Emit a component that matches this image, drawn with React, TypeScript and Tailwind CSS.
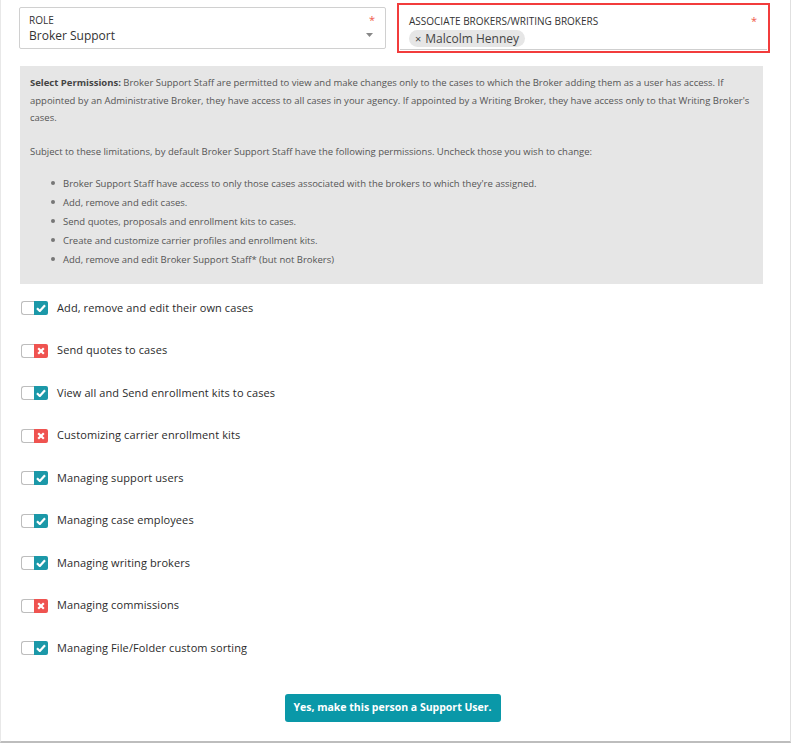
// App.tsx — support-user permissions form.
const PERMS: { label: string; on: boolean }[] = [
  { label: "Add, remove and edit their own cases", on: true },
  { label: "Send quotes to cases", on: false },
  { label: "View all and Send enrollment kits to cases", on: true },
  { label: "Customizing carrier enrollment kits", on: false },
  { label: "Managing support users", on: true },
  { label: "Managing case employees", on: true },
  { label: "Managing writing brokers", on: true },
  { label: "Managing commissions", on: false },
  { label: "Managing File/Folder custom sorting", on: true },
];

const BULLETS = [
  "Broker Support Staff have access to only those cases associated with the brokers to which they're assigned.",
  "Add, remove and edit cases.",
  "Send quotes, proposals and enrollment kits to cases.",
  "Create and customize carrier profiles and enrollment kits.",
  "Add, remove and edit Broker Support Staff* (but not Brokers)",
];

function Toggle({ on }: { on: boolean }) {
  return (
    <div className="flex h-[14px] items-center">
      <div className="h-[14px] w-[13px] rounded-l-[3px] border border-r-0 border-[#bdbdbd] bg-white" />
      <div
        className={`flex h-[14px] w-[14px] items-center justify-center rounded-r-[2px] ${
          on ? "bg-[#1b98a8]" : "bg-[#ef5350]"
        }`}
      >
        {on ? (
          <svg width="10" height="8" viewBox="0 0 10 8">
            <path d="M1 4.2 L3.8 7 L9 1.2" fill="none" stroke="white" strokeWidth="2.2" />
          </svg>
        ) : (
          <svg width="8" height="8" viewBox="0 0 8 8">
            <path d="M1.2 1.2 L6.8 6.8 M6.8 1.2 L1.2 6.8" stroke="white" strokeWidth="2.2" />
          </svg>
        )}
      </div>
    </div>
  );
}

export default function App() {
  return (
    <div
      className="h-[744px] w-[792px] bg-white"
      style={{ fontFamily: '"Open Sans", "Noto Sans", sans-serif' }}
    >
      <div className="flex h-[743px] w-[791px] flex-col border-b-2 border-l border-r border-b-[#bdbdbd] border-l-[#e8e8e8] border-r-[#e0e0e0]">
        {/* top selects */}
        <div className="flex items-start pt-[3px]">
          <div className="ml-[18px] mt-[4px] flex h-[42px] w-[367px] flex-col rounded-[2px] border border-[#d0d0d0] px-[9px] pt-[6px]">
            <div className="flex items-start justify-between">
              <span className="text-[10px] leading-[13px] text-[#333]">ROLE</span>
              <span className="mr-[1px] text-[11px] leading-[11px] text-[#f0584a]">*</span>
            </div>
            <div className="flex items-center justify-between">
              <span className="text-[12px] leading-[17px] text-[#333]">Broker Support</span>
              <svg width="7" height="4" viewBox="0 0 7 4" className="mr-[3px] mt-[-2px]">
                <path d="M0 0 L7 0 L3.5 4 Z" fill="#888" />
              </svg>
            </div>
          </div>
          <div className="ml-[11px] h-[50px] w-[373px] border-2 border-[#f23c3c] px-[1px] pt-[1px]">
            <div className="flex h-[44px] flex-col border-b border-[#cfcfcf] px-[9px] pt-[9px]">
              <div className="flex items-start justify-between">
                <span className="text-[10px] leading-[13px] text-[#333]">
                  ASSOCIATE BROKERS/WRITING BROKERS
                </span>
                <span className="mr-[1px] text-[11px] leading-[11px] text-[#f0584a]">*</span>
              </div>
              <div className="mt-[2px] flex">
                <span className="rounded-full bg-[#e6e6e6] px-[6px] text-[12px] leading-[17px] text-[#444]">
                  <span className="mr-[4px] text-[11px]">×</span>Malcolm Henney
                </span>
              </div>
            </div>
          </div>
        </div>

        {/* info panel */}
        <div className="ml-[19px] mt-[13px] h-[218px] w-[743px] bg-[#e6e6e6] px-[10px] pt-[8px] text-[9.5px] text-[#555]">
          <p className="leading-[17.5px]">
            <b className="text-[#444]">Select Permissions:</b> Broker Support Staff are permitted to view and make
            changes only to the cases to which the Broker adding them as a user has access. If appointed by an
            Administrative Broker, they have access to all cases in your agency. If appointed by a Writing Broker,
            they have access only to that Writing Broker's cases.
          </p>
          <p className="mt-[16px] leading-[17px]">
            Subject to these limitations, by default Broker Support Staff have the following permissions. Uncheck
            those you wish to change:
          </p>
          <ul className="mt-[14px] flex flex-col">
            {BULLETS.map((b) => (
              <li key={b} className="flex items-center leading-[19px]">
                <span className="ml-[21px] mr-[8px] h-[4px] w-[4px] rounded-full bg-[#777]" />
                {b}
              </li>
            ))}
          </ul>
        </div>

        {/* permission toggles */}
        <div className="ml-[20px] mt-[17px] flex flex-col gap-[28.5px]">
          {PERMS.map((p) => (
            <div key={p.label} className="flex h-[14px] items-center">
              <Toggle on={p.on} />
              <span className="ml-[9px] text-[11px] tracking-[0.1px] text-[#2b2b2b]">{p.label}</span>
            </div>
          ))}
        </div>

        <div className="mt-[39px] flex justify-center pr-[6px]">
          <button className="h-[28px] w-[216px] rounded-[3px] bg-[#0a98a8] text-[10.5px] font-bold text-white">
            Yes, make this person a Support User.
          </button>
        </div>
      </div>
    </div>
  );
}
